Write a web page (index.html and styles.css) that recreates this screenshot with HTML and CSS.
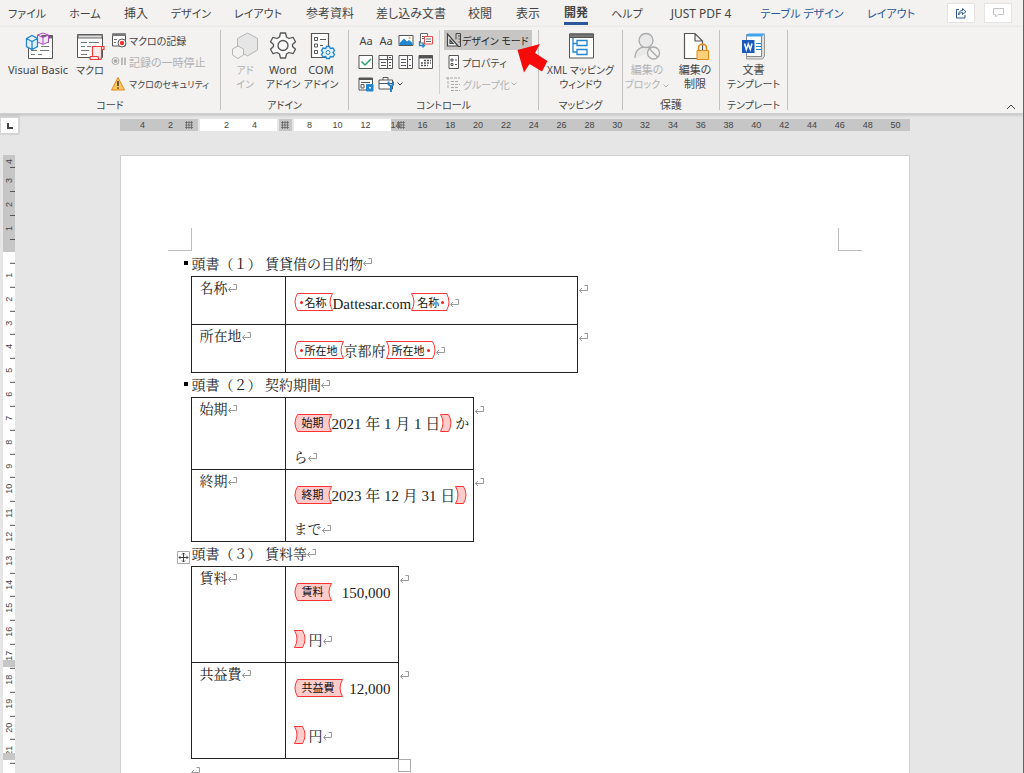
FILE: index.html
```html
<!DOCTYPE html>
<html lang="ja">
<head>
<meta charset="utf-8">
<title>Word</title>
<link rel="stylesheet" href="styles.css">
</head>
<body>
<svg class="defs" aria-hidden="true">
  <symbol id="ret" viewBox="0 0 10 9"><path d="M8.500 .5V5.500H.5M5.500 .5H8.500M3 3L.5 5.500L3 8" fill="none" stroke="#9a9a9a"/></symbol>
  <symbol id="open-l" viewBox="0 0 6 18"><path d="M6 .5H3.500Q-1.500 9 3.500 17.500H6"/></symbol>
  <symbol id="open-r" viewBox="0 0 6 18"><path d="M0 .5H5.500Q.5 9 5.500 17.500H0"/></symbol>
  <symbol id="close-l" viewBox="0 0 6 18"><path d="M6 .5H.5Q5.500 9 .5 17.500H6"/></symbol>
  <symbol id="close-r" viewBox="0 0 6 18"><path d="M0 .5H2.500Q7.500 9 2.500 17.500H0"/></symbol>
  <symbol id="hatch" viewBox="0 0 8 8"><path d="M1.500 0V8M4 0V8M6.500 0V8M0 1.500H8M0 4H8M0 6.500H8" stroke="#666" stroke-width=".8" fill="none"/></symbol>
  <symbol id="chev" viewBox="0 0 6 4"><path d="M.5 .5L3 3L5.500 .5" fill="none" stroke="currentColor"/></symbol>
</svg>
<div class="app">
  <nav class="tabs" aria-label="リボン">
    <button class="kana">ファイル</button><button class="kana">ホーム</button><button>挿入</button><button class="kana">デザイン</button><button class="kana">レイアウト</button><button>参考資料</button><button>差し込み文書</button><button>校閲</button><button>表示</button><button class="active">開発</button><button class="kana">ヘルプ</button><button>JUST PDF 4</button><button class="context kana">テーブル デザイン</button><button class="context kana">レイアウト</button>
    <div class="corner-actions">
      <button aria-label="共有"><svg width="12" height="12" viewBox="0 0 12 12" fill="none" stroke="#2b579a"><path d="M4 2.500H1.500V11H10V8M3.500 8C3.500 5 5 3.500 7.500 3.500V1.500L11 4.700L7.500 7.500V5.500C5.500 5.500 4.500 6.500 3.500 8Z"/></svg></button>
      <button aria-label="コメント"><svg width="11" height="10" viewBox="0 0 11 10" fill="none" stroke="#c4c4c4"><path d="M.5 .5H10.500V6.500H5L2.500 9V6.500H.5Z"/></svg></button>
    </div>
  </nav>

  <div class="ribbon">
    <section class="group g-code">
      <div class="tools">
        <button class="big"><svg width="30" height="30" viewBox="0 0 30 30" fill="none"><path d="M5.500 17V28.500H29.500V5.500H19" stroke="#555" fill="#fff"/><path d="M18 5.500H29.500V8.500H18Z" fill="#666"/><path d="M20 12.500H26M18 16.500H26M8 20.500H14M17 20.500H26M8 24.500H12M15 24.500H19" stroke="#777"/><path d="M14.500 5L20 3L25.500 5V12L20 14.500L14.500 12ZM14.500 5L20 7.500L25.500 5M20 7.500V14" stroke="#ab4fc0" fill="#f5e6f8"/><path d="M3.500 8.500L9 5.500L14.500 8.500V16.500L9 19.500L3.500 16.500ZM3.500 8.500L9 11.500L14.500 8.500M9 11.500V19" stroke="#2186d0" fill="#e2f1fb" stroke-width="1.300"/></svg><span>Visual Basic</span></button>
        <button class="big"><svg width="30" height="30" viewBox="0 0 30 30" fill="none"><path d="M2.500 4.500H27.500V27.500H2.500Z" fill="#fff" stroke="#555"/><path d="M3 5H27V8H3Z" fill="#ddd" stroke="#666"/><path d="M6 12.500H12M14 12.500H24M6 16.500H10M12 16.500H16M6 20.500H14M6 24.500H12" stroke="#777"/><path d="M17.500 26.500V16.500H29V19.500H26.500V27.500Q26.500 29.500 25 29.500H15.500Q14.500 28 15.500 26.500H23Q23 28.500 24.500 29.500M26.500 19.500V18Q26.500 16.500 27.500 16.500" fill="#fdeaea" stroke="#f03b3b" stroke-width="1.200"/></svg><span class="kana">マクロ</span></button>
        <div class="rows">
          <button><svg width="16" height="16" viewBox="0 0 16 16" fill="none"><path d="M1.500 2H14.500V14H1.500Z" fill="#fff" stroke="#555"/><path d="M1 1.500H15V4H1Z" fill="#777"/><path d="M3 7.500H6M3 10.500H5" stroke="#777"/><circle cx="11" cy="11" r="4" fill="#fff" stroke="#555"/><circle cx="11" cy="11" r="2.200" fill="#e33"/></svg><span class="kana">マクロの記録</span></button>
          <button class="off rec"><svg width="16" height="16" viewBox="0 0 16 16" fill="none" stroke="#aaa"><circle cx="4.500" cy="7" r="3.500"/><circle cx="4.500" cy="7" r="1.500" fill="#aaa"/><path d="M11 3.500V11M14 3.500V11" stroke-width="1.500"/></svg><span>記録の一時停止</span></button>
          <button><svg width="16" height="16" viewBox="0 0 16 16"><path d="M7 1.500L13.500 14H.5Z" fill="#ffc65c" stroke="#e08a1e"/><path d="M7 5V10M7 11.300V12.800" stroke="#333" stroke-width="1.500"/></svg><span class="sec">マクロのセキュリティ</span></button>
        </div>
      </div>
      <h2>コード</h2>
    </section>

    <section class="group g-addin">
      <div class="tools">
        <button class="big off"><svg width="30" height="30" viewBox="0 0 30 30" fill="#e6e6e6" stroke="#b5b5b5"><path d="M17.500 3L27.500 8.500V20L17.500 26L7.500 20V8.500Z"/><path d="M8 16L13.500 19V25L8 28.500L2.500 25V19Z" fill="#f3f2f1"/></svg><span class="kana">アド<br>イン</span></button>
        <button class="big"><svg width="30" height="30" viewBox="0 0 30 30" fill="#fafafa" stroke="#555" stroke-width="1.300"><path d="M12.500 3H17.500L18.500 7L21 8.500L25 7.300L27.500 11.700L24.500 14.500V16.500L27.500 19.300L25 23.700L21 22.500L18.500 24L17.500 28H12.500L11.500 24L9 22.500L5 23.700L2.500 19.300L5.500 16.500V14.500L2.500 11.700L5 7.300L9 8.500L11.500 7Z" stroke-linejoin="round"/><circle cx="15" cy="15.500" r="5"/></svg><span>Word<br><span class="kana">アドイン</span></span></button>
        <button class="big"><svg width="30" height="30" viewBox="0 0 30 30" fill="none" stroke="#555"><path d="M5.500 3.500H22.500V27.500H5.500Z" fill="#fff" stroke-width="1.200"/><path d="M8.500 7.500H11.500V10.500H8.500ZM8.500 14H11.500V17H8.500ZM8.500 20.500H11.500V23.500H8.500ZM14 9.500H20M14 15.500H17"/><path d="M20.500 16.500H23.500L24.300 18.500L27 18L28.500 20.500L27 22.500L28.500 24.500L27 27L24.300 26.500L23.500 28.500H20.500L19.700 26.500L17 27L15.500 24.500L17 22.500L15.500 20.500L17 18L19.700 18.500Z" fill="#e5f3fc" stroke="#2186d0" stroke-width="1.300"/><circle cx="22" cy="22.500" r="2" fill="#fff" stroke="#2186d0"/></svg><span>COM<br><span class="kana">アドイン</span></span></button>
      </div>
      <h2>アドイン</h2>
    </section>

    <section class="group g-control">
      <div class="tools">
        <div class="palette">
          <button>Aa</button><button>Aa</button>
          <button aria-label="画像"><svg width="16" height="16" viewBox="0 0 16 16" fill="none"><path d="M1 3.500H15V13.500H1Z" fill="#fff" stroke="#555"/><path d="M1.500 11L6 6.500L9 9.500L11 8L14.500 11V13H1.500Z" fill="#2186d0"/><circle cx="11.500" cy="6" r="1" fill="#f0a030"/></svg></button>
          <button aria-label="ビルディング ブロック"><svg width="16" height="16" viewBox="0 0 16 16" fill="none"><path d="M2.500 1.500H9.500V11H2.500Z" fill="#fff" stroke="#666"/><path d="M4 4.500H8M4 6.500H6" stroke="#666"/><path d="M6.500 4.500H14.500V12H6.500Z" fill="#fff" stroke="#e34b4b"/><path d="M8 7H13M8 9.500H13" stroke="#666"/><path d="M1.500 9V13.500H6M4.500 11.500L6.500 13.500L4.500 15.500" stroke="#2186d0" stroke-width="1.300"/></svg></button>
          <button aria-label="チェック ボックス"><svg width="16" height="16" viewBox="0 0 16 16" fill="none"><path d="M1 1.500H14.500V14.500H1Z" fill="#fff" stroke="#555"/><path d="M3.500 7.500L7 11L13 5" stroke="#26a269" stroke-width="1.500"/></svg></button>
          <button aria-label="コンボ ボックス"><svg width="16" height="16" viewBox="0 0 16 16" fill="none" stroke="#555"><path d="M1 1.500H14.500V14.500H1ZM1 5.500H14.500M9.500 1.500V14.500" fill="#fff"/><path d="M3 8.500H8M3 11.500H8M11 8.500H13M11 11.500H13M11 3.500H13"/></svg></button>
          <button aria-label="ドロップダウン リスト"><svg width="16" height="16" viewBox="0 0 16 16" fill="none" stroke="#555"><path d="M1 1.500H14.500V14.500H1ZM9.500 1.500V14.500" fill="#fff"/><path d="M3 5.500H8M3 8.500H8M3 11.500H8M11 5.500H13M11 11.500H13"/></svg></button>
          <button aria-label="日付の選択"><svg width="16" height="16" viewBox="0 0 16 16" fill="none" stroke="#555"><path d="M1 1.500H14.500V14.500H1Z" fill="#fff"/><path d="M1 3H14.500" stroke-width="3"/><path d="M6 6.500H13M3 9H13M3 11.500H10" stroke-width="1.500" stroke-dasharray="2 1"/></svg></button>
          <button aria-label="繰り返し"><svg width="16" height="16" viewBox="0 0 16 16" fill="none" stroke="#555"><path d="M1 2H14.500V14H1Z" fill="#fff"/><path d="M1 3H14.500" stroke-width="2"/><path d="M3 6.500H12M3 8.500H6V12H3Z"/><path d="M8.500 8.500H15V15H8.500Z" fill="#2186d0" stroke="#2186d0"/><path d="M11 11.700H13" stroke="#fff" stroke-width="1.500"/></svg></button>
          <button aria-label="以前のツール"><svg width="16" height="16" viewBox="0 0 16 16" fill="none" stroke="#555"><path d="M1 4H14.500V13H1ZM5 4V1.500H10V4M1 7.500H14.500" fill="#fff"/><path d="M10.500 5.500V8.500L13 10L15.500 8.500V5.500M13 9V16" stroke="#2186d0" stroke-width="2"/></svg></button>
          <button class="caret" aria-label="その他"><svg width="6" height="4"><use href="#chev"/></svg></button>
        </div>
        <div class="rows design">
          <button class="pressed" aria-pressed="true"><svg width="16" height="16" viewBox="0 0 16 16" fill="none" stroke="#444"><path d="M1.500 2L12 14H1.500ZM4 8L7 11.500H4Z" fill="#f0f0f0" stroke-width="1.200"/><path d="M10 7.500V1.500H14.500V14.500H12M12 4H14M12.500 7H14M12.500 10H14" fill="none"/></svg><span class="kana">デザイン モード</span></button>
          <button><svg width="16" height="16" viewBox="0 0 16 16" fill="#fff" stroke="#555"><path d="M3 1.500H12.500V14.500H3Z"/><path d="M5 5H7V7H5ZM5 9.500H7V11.500H5ZM9 6H11M9 10.500H11"/></svg><span class="kana">プロパティ</span></button>
          <button class="off grp"><svg width="16" height="16" viewBox="0 0 16 16" fill="none" stroke="#aaa"><path d="M2 1V12M0 2H14M5 5.500H12M5 8.500H14M5 11.500H12M5 14.500H14" stroke-dasharray="3 1"/></svg><span class="kana">グループ化</span><svg width="6" height="4"><use href="#chev"/></svg></button>
        </div>
      </div>
      <h2>コントロール</h2>
    </section>

    <section class="group g-map">
      <div class="tools">
        <button class="big"><svg width="30" height="30" viewBox="0 0 30 30" fill="#fff" stroke="#555"><path d="M3.500 4H27.500V28H3.500Z"/><path d="M3.500 4H27.500V7.500H3.500Z" fill="#777"/><g stroke="#2186d0" stroke-width="1.300"><path d="M7 8V22H11M7 13.500H11" fill="none"/><path d="M11 10.500H21V15.500H11ZM11 19.500H21V24.500H11Z"/></g></svg><span class="kana">XML マッピング<br>ウィンドウ</span></button>
      </div>
      <h2>マッピング</h2>
    </section>

    <section class="group g-protect">
      <div class="tools">
        <button class="big off"><svg width="30" height="30" viewBox="0 0 30 30" fill="#e9e9e9" stroke="#aaa" stroke-width="1.300"><path d="M3 28C3 20 8 17 13 17C17 17 20 19 21 22" /><circle cx="14" cy="10.500" r="7"/><circle cx="21.500" cy="23" r="6" fill="#f3f2f1"/><path d="M17.500 19L25.500 27"/></svg><span>編集の<br><span class="kana">ブロック</span> <svg width="6" height="4"><use href="#chev"/></svg></span></button>
        <button class="big"><svg width="30" height="30" viewBox="0 0 30 30" fill="#fff"><path d="M4.500 3.500H15L22.500 11V28.500H4.500ZM15 3.500V11H22.500" stroke="#555" stroke-width="1.200"/><path d="M18.500 20V18C18.500 13 26.500 13 26.500 18V20" fill="none" stroke="#e08a1e" stroke-width="1.600"/><path d="M17 20.500H28.500V29.500H17Z" fill="#ffd07a" stroke="#e08a1e"/></svg><span>編集の<br>制限</span></button>
      </div>
      <h2 class="kanji">保護</h2>
    </section>

    <section class="group g-tmpl">
      <div class="tools">
        <button class="big"><svg width="30" height="30" viewBox="0 0 30 30"><path d="M7.500 7V29H23.500L25.500 26V4.500H10Z" fill="#ddd" stroke="#999"/><path d="M7.500 4.500H22.500V26.500H7.500Z" fill="#fff" stroke="#888"/><path d="M7 6L9.500 3.500H26L23 6.500H7Z" fill="#41a5ee"/><path d="M17 13.500H22M17 16.500H22M17 19.500H22" stroke="#2186d0"/><path d="M3 10H15.500V23H3Z" fill="#185abd"/><path d="M5.500 13.500L7.300 19.500L9.300 14L11.300 19.500L13 13.500" fill="none" stroke="#fff" stroke-width="1.500"/></svg><span>文書<br><span class="kana">テンプレート</span></span></button>
      </div>
      <h2>テンプレート</h2>
    </section>
    <button class="collapse" aria-label="リボンを折りたたむ"><svg width="10" height="6" viewBox="0 0 10 6" fill="none" stroke="#444"><path d="M1 5L5 1L9 5"/></svg></button>
    <svg class="pointer" width="32" height="30" viewBox="0 0 32 30"><path d="M.5 7L23 1L18 10L30.500 18L25 28.500L12.500 21L7 29.500Z" fill="#f60b0b"/></svg>
  </div>

  <div class="workspace">
    <button class="tabstop" aria-label="左揃えタブ"><svg width="6" height="6" viewBox="0 0 6 6"><path d="M1 0V5H6" fill="none" stroke="#444" stroke-width="2"/></svg></button>
    <div class="hruler">
      <div class="seg s1"><b>4</b><b>2</b><svg width="8" height="8"><use href="#hatch"/></svg></div>
      <div class="seg white s2"><b>2</b><b>4</b></div>
      <div class="seg s3"><svg width="8" height="8"><use href="#hatch"/></svg></div>
      <div class="seg white s4"><b>8</b><b>10</b><b>12</b></div>
      <div class="seg s5"><b class="edge">14</b><svg width="8" height="8"><use href="#hatch"/></svg><b>16</b><b>18</b><b>20</b><b>22</b><b>24</b><b>26</b><b>28</b><b>30</b><b>32</b><b>34</b><b>36</b><b>38</b><b>40</b><b>42</b><b>44</b><b>46</b><b>48</b><b>50</b></div>
    </div>
    <div class="vruler">
      <div class="top"><b>4</b><b>3</b><b>2</b><b>1</b></div>
      <div class="rest"><b>1</b><b>2</b><b>3</b><b>4</b><b>5</b><b>6</b><b>7</b><b>8</b><b>9</b><b>10</b><b>11</b><b>12</b><b>13</b><b>14</b><b>15</b><b>16</b><b>17</b><b>18</b><b>19</b><b>20</b><b>21</b><b></b></div>
      <i class="stop first"></i><i class="stop second"></i>
    </div>
    <main class="page">
      <div class="crop"><i></i><i></i></div>
      <div class="doc">
        <h1>頭書（１） 賃貸借の目的物<svg class="ret"><use href="#ret"/></svg></h1>
        <table class="t1">
          <tr><th>名称<svg class="ret"><use href="#ret"/></svg></th><td><div class="line"><span class="tag"><svg class="cap"><use href="#open-l"/></svg><span class="named">名称</span><svg class="cap"><use href="#open-r"/></svg></span>Dattesar.com<span class="tag"><svg class="cap"><use href="#close-l"/></svg><span class="named end">名称</span><svg class="cap"><use href="#close-r"/></svg></span><svg class="ret"><use href="#ret"/></svg></div></td><td class="mark"><svg class="ret"><use href="#ret"/></svg></td></tr>
          <tr><th>所在地<svg class="ret"><use href="#ret"/></svg></th><td><div class="line"><span class="tag"><svg class="cap"><use href="#open-l"/></svg><span class="named">所在地</span><svg class="cap"><use href="#open-r"/></svg></span><span class="jp">京都府</span><span class="tag"><svg class="cap"><use href="#close-l"/></svg><span class="named end">所在地</span><svg class="cap"><use href="#close-r"/></svg></span><svg class="ret"><use href="#ret"/></svg></div></td><td class="mark"><svg class="ret"><use href="#ret"/></svg></td></tr>
        </table>
        <h1>頭書（２） 契約期間<svg class="ret"><use href="#ret"/></svg></h1>
        <table class="t2">
          <tr><th>始期<svg class="ret"><use href="#ret"/></svg></th><td><div class="line"><span class="tag fill"><svg class="cap"><use href="#open-l"/></svg><span>始期</span><svg class="cap"><use href="#open-r"/></svg></span><span class="date">2021 年 1 月 1 日</span><span class="tag fill close"><svg class="cap"><use href="#close-l"/></svg><svg class="cap"><use href="#close-r"/></svg></span><span class="jp">か</span></div><div class="line short"><span class="jp">ら</span><svg class="ret"><use href="#ret"/></svg></div></td><td class="mark"><svg class="ret"><use href="#ret"/></svg></td></tr>
          <tr><th>終期<svg class="ret"><use href="#ret"/></svg></th><td><div class="line"><span class="tag fill"><svg class="cap"><use href="#open-l"/></svg><span>終期</span><svg class="cap"><use href="#open-r"/></svg></span><span class="date">2023 年 12 月 31 日</span><span class="tag fill close"><svg class="cap"><use href="#close-l"/></svg><svg class="cap"><use href="#close-r"/></svg></span></div><div class="line short"><span class="jp">まで</span><svg class="ret"><use href="#ret"/></svg></div></td><td class="mark"><svg class="ret"><use href="#ret"/></svg></td></tr>
        </table>
        <h1>頭書（３） 賃料等<svg class="ret"><use href="#ret"/></svg></h1>
        <div class="selected">
        <table class="t3">
          <tr><th>賃料<svg class="ret"><use href="#ret"/></svg></th><td><div class="line spread"><span class="tag fill"><svg class="cap"><use href="#open-l"/></svg><span>賃料</span><svg class="cap"><use href="#open-r"/></svg></span><span>150,000</span></div><div class="line last"><span class="tag fill close"><svg class="cap"><use href="#close-l"/></svg><svg class="cap"><use href="#close-r"/></svg></span><span class="jp">円</span><svg class="ret"><use href="#ret"/></svg></div></td><td class="mark"><svg class="ret"><use href="#ret"/></svg></td></tr>
          <tr><th>共益費<svg class="ret"><use href="#ret"/></svg></th><td><div class="line spread"><span class="tag fill"><svg class="cap"><use href="#open-l"/></svg><span>共益費</span><svg class="cap"><use href="#open-r"/></svg></span><span>12,000</span></div><div class="line last"><span class="tag fill close"><svg class="cap"><use href="#close-l"/></svg><svg class="cap"><use href="#close-r"/></svg></span><span class="jp">円</span><svg class="ret"><use href="#ret"/></svg></div></td><td class="mark"><svg class="ret"><use href="#ret"/></svg></td></tr>
        </table>
        <svg class="move" width="13" height="13" viewBox="0 0 13 13" fill="#fff" stroke="#777"><path d="M.5 .5H12.500V12.500H.5Z" stroke="#aaa"/><path d="M6.500 2V11M2 6.500H11M5 3.500L6.500 2L8 3.500M5 9.500L6.500 11L8 9.500M3.500 5L2 6.500L3.500 8M9.500 5L11 6.500L9.500 8" fill="none" stroke="#444"/></svg>
        <i class="resize"></i>
        </div>
        <p><svg class="ret"><use href="#ret"/></svg></p>
      </div>
    </main>
  </div>
</div>
</body>
</html>
```
FILE: styles.css
```css
* { box-sizing: border-box; }
body { margin: 0; font-family: "Noto Sans", "Noto Sans CJK JP", sans-serif; font-size: 11px; color: #444; }
.defs { display: none; }
button { margin: 0; padding: 0; border: 0; background: none; font: inherit; color: inherit; white-space: nowrap; font-feature-settings: "palt"; }
svg { flex: none; }
h1, h2, p { margin: 0; font-weight: 400; }

.app { height: 100vh; overflow: hidden; display: flex; flex-direction: column; background: #e6e6e6; border-right: 1px solid #41659c; }

.tabs { display: grid; grid-template-columns: 54px 62px 40px 70px 64px 80px 82px 56px 40px 56px 46px 102px 100px 78px 1fr; height: 27px; background: #f3f2f1; font-size: 12px; }
.tabs > button { display: flex; justify-content: center; align-items: center; line-height: 26px; }
.tabs .kana { font-size: 11px; }
.tabs .context { color: #2b579a; }
.tabs .active { font-weight: 700; justify-self: center; border-bottom: 3px solid #2b579a; height: 25px; padding-top: 3px; }
.corner-actions { display: flex; justify-content: flex-end; gap: 9px; padding: 3px 11px 0 0; }
.corner-actions button { width: 28px; height: 20px; background: #fff; border: 1px solid #e6e4e2; display: grid; place-items: center; }

.ribbon { position: relative; display: flex; height: 87px; padding-top: 3px; background: #f3f2f1; border-bottom: 1px solid #d2d0ce; box-shadow: 0 1px 3px #bbb; z-index: 1; }
.group { display: flex; flex-direction: column; height: 80px; border-right: 1px solid #c4c2c0; }
.group h2 { font-size: 10px; line-height: 10px; text-align: center; font-feature-settings: "palt"; }
.group .kanji { font-size: 11px; }
.tools { display: flex; height: 70px; }
.kana { font-size: 10px; }
.sec { font-size: 9px; }
.g-code { width: 221px; }
.g-addin { width: 128px; }
.g-addin .tools { padding-left: 5px; }
.g-control { width: 190px; }
.g-map { width: 84px; }
.g-protect { width: 97px; }
.g-tmpl { width: 68px; }
.big { display: flex; flex-direction: column; align-items: center; flex: 1; min-width: 0; line-height: 14px; }
.big > span { margin-top: 3px; text-align: center; }
.g-addin .big { flex: 0 0 38px; }
.off { color: #b1b1b1; }
.g-code .big { flex: 0 0 76px; }
.g-code .big + .big { flex-basis: 28px; }
.rows { display: flex; flex-direction: column; gap: 2px; }
.g-code .rows { margin-left: 7px; }
.rows button { display: flex; align-items: center; gap: 2px; height: 20px; }
.palette { display: grid; grid-template-columns: repeat(4, 20px); grid-auto-rows: 20px; row-gap: 2px; margin-left: 7px; }
.palette button { display: grid; place-items: center; }
.palette .caret { justify-items: start; padding-left: 1px; }
.design { margin-left: 3px; padding-left: 4px; border-left: 1px solid #d2d0ce; height: 64px; }
.design button { width: 88px; padding-left: 2px; gap: 0; }
.pressed { background: #c8c6c4; color: #262626; }
.design .grp { gap: 1px; }
.collapse { margin-left: auto; align-self: flex-end; padding: 0 7px 3px 0; }
.collapse svg, .tabstop svg { display: block; }
.pointer { position: absolute; left: 517px; top: 16px; }

.workspace { flex: 1; min-height: 0; display: grid; grid-template: 41px 1fr / 20px 1fr; padding-right: 14px; }
.tabstop { width: 20px; height: 21px; border: 2px solid #d4d4d4; border-left-width: 1px; border-top-width: 4px; background: #fff; display: grid; place-items: center; }
.hruler { display: flex; gap: 2px; width: 100%; max-width: 790px; height: 12px; margin: 5px auto 0; font: 9px/12px "Liberation Sans", sans-serif; }
.hruler b, .vruler b { font-weight: 400; }
.seg { display: flex; align-items: center; background: #c6c6c6; }
.white { background: #fff; }
.seg b { flex: 0 0 28px; text-align: center; }
.s1 { width: 78px; padding-left: 9px; }
.s2 { width: 77px; padding-left: 13px; }
.s3 { width: 13px; justify-content: center; }
.s4 { width: 97px; padding-left: 2px; }
.s5 { flex: 1; margin-left: -2px; }
.s5 b { flex: 1; }
.s5 .edge { flex: 0 0 9px; }
.s5 svg { margin: 0 4px 0 -4px; }
.vruler { position: relative; width: 12px; margin-left: 3px; overflow: hidden; background: #fff; font: 9px/12px "Liberation Sans", sans-serif; }
.vruler div { display: grid; }
.vruler .top { height: 97px; background: #c6c6c6; grid-template-rows: 13px repeat(3, 24px); }
.vruler .rest { height: 535px; padding-top: 11px; grid-auto-rows: 1fr; }
.vruler b { writing-mode: vertical-rl; transform: rotate(180deg); text-align: center; background: linear-gradient(#555, #555) left bottom / 5px 1px no-repeat; }
.vruler .top b { background-position: left top; }
.stop { position: absolute; left: 0; right: 0; height: 7px; background: #c6c6c6; }
.first { top: 505px; }
.second { top: 598px; }

.page { width: 100%; max-width: 790px; margin: 0 auto; padding-top: 72px; background: #fff; border: 1px solid #cfcfcf; border-bottom: 0; }
.crop { display: flex; justify-content: space-between; padding: 0 47px; }
.crop i { width: 24px; height: 23px; border: solid #bdbdbd; border-width: 0 1px 1px 0; }
.crop i + i { border-width: 0 0 1px 1px; }
.doc { padding-left: 70px; font-family: "Liberation Serif", "Noto Serif CJK JP", "Noto Sans CJK JP", serif; font-size: 15px; color: #222; }
.doc h1 { display: flex; align-items: center; margin-left: -7px; height: 25px; padding-bottom: 2px; font-size: 14px; white-space: pre; }
.doc h1::before { content: ""; width: 4px; height: 4px; margin-right: 4px; background: #000; }
.doc h1 ~ h1 { height: 24px; }
.ret { width: 10px; height: 9px; }
table { border-collapse: collapse; table-layout: fixed; }
th, td { border: 1px solid #222; padding: 0 7px 0 8px; text-align: left; vertical-align: top; white-space: nowrap; line-height: 24px; }
th { width: 94px; font-size: 14px; font-weight: 400; }
td.mark { width: 14px; padding: 0 1px; border: 0; }
.t1 { width: 401px; }
.t2 { width: 297px; }
.t3 { width: 222px; }
.t1 tr { height: 48px; }
.t2 tr { height: 72px; }
.t3 tr { height: 96px; }
.line { display: flex; align-items: center; height: 47px; padding-top: 6px; line-height: 20px; }
.t2 .line, .t3 .line { padding-top: 4px; height: 48px; }
.t2 .short { height: 23px; padding-top: 0; }
.t3 .last { height: 47px; }
.spread { justify-content: space-between; }
.jp { font-size: 14px; white-space: pre; }
.tag { display: flex; height: 18px; margin-top: -3px; color: #111; fill: none; stroke: #f33; font: 400 11px/15px "Noto Sans CJK JP", sans-serif; }
.tag > span { border: solid #f33; border-width: 1px 0; padding: 0 2px; }
.cap { width: 6px; height: 18px; }
.fill { fill: #fcc; }
.fill > span { background: #fcc; }
.close { margin-right: 3px; }
.tag .named { display: flex; align-items: center; gap: 2px; padding: 0; }
.named::before, .named.end::after { content: ""; width: 3px; height: 3px; border-radius: 50%; background: #e22; }
.named.end::before { display: none; }
.selected { position: relative; width: fit-content; }
.move { position: absolute; left: -14px; top: -15px; }
.resize { position: absolute; right: 2px; bottom: -13px; width: 13px; height: 13px; background: #fff; border: 1px solid #aaa; }
.doc p { display: flex; align-items: center; height: 24px; }
```
